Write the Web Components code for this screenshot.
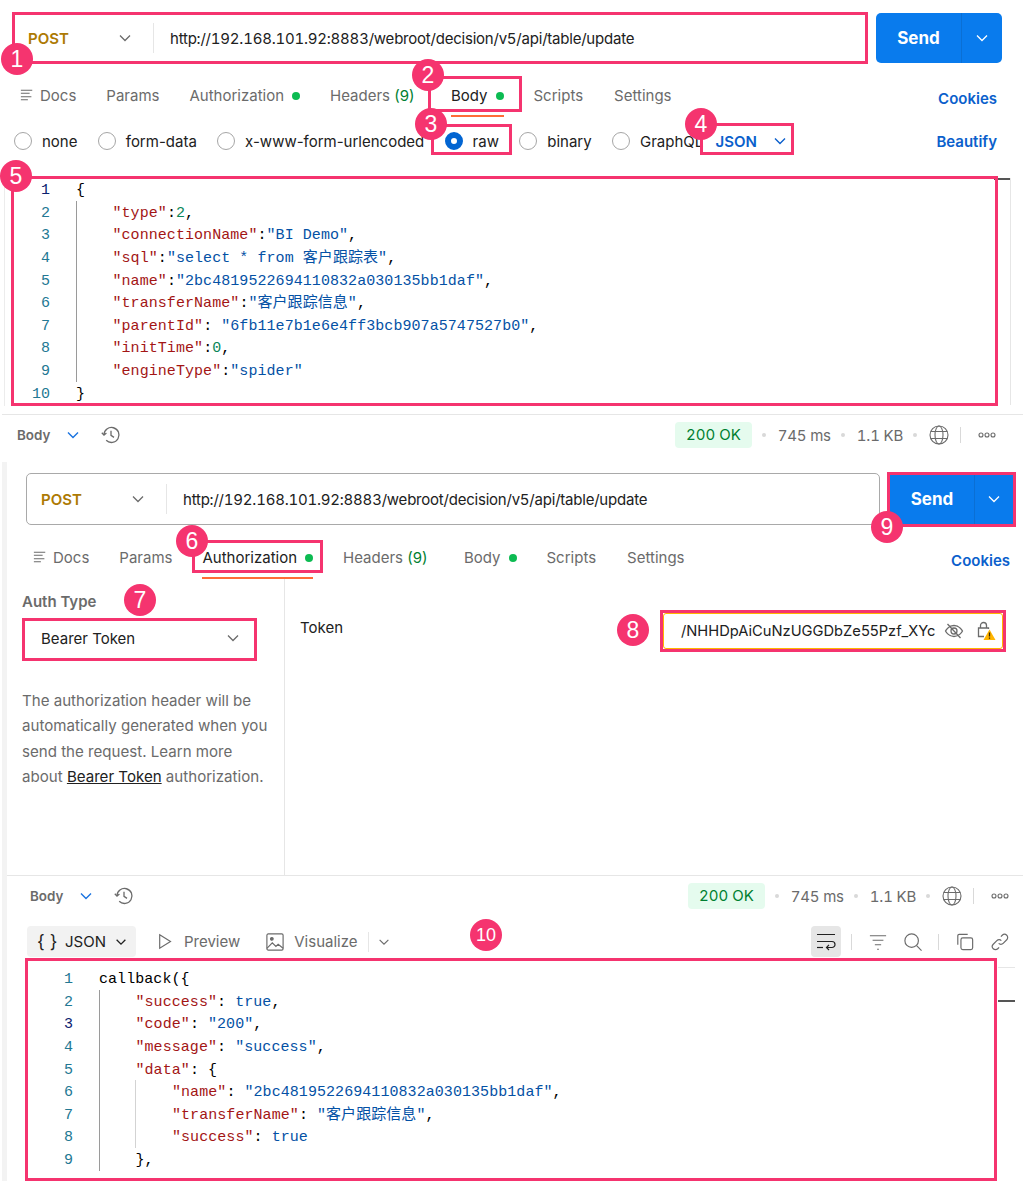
<!DOCTYPE html>
<html lang="en">
<head>
<meta charset="utf-8">
<title>Postman request</title>
<style>
    html, body { margin: 0; background: #fff; }
    body {
        position: relative;
        width: 1023px;
        height: 1181px;
        overflow: hidden;
        font-family: Inter, "Noto Sans", sans-serif;
    }
</style>
</head>
<body>
<req-pane>
    <url-bar></url-bar>
    <tab-row active="Body"></tab-row>
    <body-options></body-options>
    <code-view gutter="50" ruler="0">
        <code-line n="1" active>{</code-line>
        <code-line n="2" g1><span class="k">"type"</span>:<span class="n">2</span>,</code-line>
        <code-line n="3" g1><span class="k">"connectionName"</span>:<span class="s">"BI Demo"</span>,</code-line>
        <code-line n="4" g1><span class="k">"sql"</span>:<span class="s">"select * from 客户跟踪表"</span>,</code-line>
        <code-line n="5" g1><span class="k">"name"</span>:<span class="s">"2bc4819522694110832a030135bb1daf"</span>,</code-line>
        <code-line n="6" g1><span class="k">"transferName"</span>:<span class="s">"客户跟踪信息"</span>,</code-line>
        <code-line n="7" g1><span class="k">"parentId"</span>: <span class="s">"6fb11e7b1e6e4ff3bcb907a5747527b0"</span>,</code-line>
        <code-line n="8" g1><span class="k">"initTime"</span>:<span class="n">0</span>,</code-line>
        <code-line n="9" g1><span class="k">"engineType"</span>:<span class="s">"spider"</span></code-line>
        <code-line n="10" depth="0">}</code-line>
    </code-view>
    <status-bar></status-bar>
</req-pane>

<req-pane second>
    <url-bar></url-bar>
    <tab-row active="Authorization"></tab-row>
    <auth-pane></auth-pane>
    <status-bar></status-bar>
    <resp-toolbar></resp-toolbar>
    <code-view gutter="72" ruler="32" second>
        <code-line n="1">callback({</code-line>
        <code-line n="2" g1><span class="k">"success"</span>: <span class="s">true</span>,</code-line>
        <code-line n="3" g1 active><span class="k">"code"</span>: <span class="s">"200"</span>,</code-line>
        <code-line n="4" g1><span class="k">"message"</span>: <span class="s">"success"</span>,</code-line>
        <code-line n="5" g1><span class="k">"data"</span>: {</code-line>
        <code-line n="6" g1 g2 depth="2"><span class="k">"name"</span>: <span class="s">"2bc4819522694110832a030135bb1daf"</span>,</code-line>
        <code-line n="7" g1 g2 depth="2"><span class="k">"transferName"</span>: <span class="s">"客户跟踪信息"</span>,</code-line>
        <code-line n="8" g1 g2 depth="2"><span class="k">"success"</span>: <span class="s">true</span></code-line>
        <code-line n="9" g1>},</code-line>
    </code-view>
</req-pane>

<anno-box x="12" y="12" w="856" h="52"></anno-box>
<anno-box x="428" y="76" w="94" h="36"></anno-box>
<anno-box x="431" y="124" w="81" h="31"></anno-box>
<anno-box x="700" y="123" w="94" h="32"></anno-box>
<anno-box x="11" y="176" w="987" h="230"></anno-box>
<anno-box x="192" y="540" w="131" h="33"></anno-box>
<anno-box x="22" y="618" w="235" h="43"></anno-box>
<anno-box x="660" y="610" w="346" h="42"></anno-box>
<anno-box x="887" y="472" w="129" h="55"></anno-box>
<anno-box x="25" y="958" w="972" h="223"></anno-box>

<anno-pin x="17" y="59">1</anno-pin>
<anno-pin x="428" y="75">2</anno-pin>
<anno-pin x="431" y="124">3</anno-pin>
<anno-pin x="701" y="124">4</anno-pin>
<anno-pin x="16" y="176">5</anno-pin>
<anno-pin x="192" y="541">6</anno-pin>
<anno-pin x="140" y="600">7</anno-pin>
<anno-pin x="633" y="630">8</anno-pin>
<anno-pin x="887" y="527">9</anno-pin>
<anno-pin x="486" y="935" small>10</anno-pin>

<script>
const ICONS = {
    chevron: '<path d="M3 5.5l5 5 5-5"/>',
    docs: '<path d="M1 2.5h13M1 6h10M1 10h12M1 13.5h8"/>',
    history: '<path d="M3 10a7.5 7.5 0 1 1 2.2 5.3"/><path d="M.8 7.8 3 10.2l2.4-2.2"/><path d="M10 5.8v4.6l3 2"/>',
    globe: '<circle cx="10" cy="10" r="9"/><ellipse cx="10" cy="10" rx="4" ry="9"/><path d="M1.8 6.5h16.4M1.8 13.5h16.4"/>',
    eyeoff: '<path d="M1.5 10S4.5 4.5 10 4.5 18.5 10 18.5 10 15.5 15.5 10 15.5 1.5 10 1.5 10z"/><circle cx="10" cy="10" r="3"/><path d="M3.5 3l13 14"/>',
    lock: '<path d="M4.5 7V4.5a3 3 0 0 1 6 0V7"/><path d="M8 15.5H2.5v-8.5h10v1"/><path d="M13.5 8.5l6 10.5h-12z" fill="#ffb400" stroke="none"/><path d="M13.5 11.5v4M13.5 16.5v1.2" stroke="#3b2a00"/>',
    play: '<path d="M3 2l12 7.5L3 17z"/>',
    image: '<rect x="1" y="1" width="18" height="18" rx="1.5"/><circle cx="6.5" cy="6.5" r="1.5" fill="currentColor"/><path d="M1 17l6-6 4 4 2.5-2.5L19 17"/>',
    wrap: '<path d="M1 2.5h18M1 9.5h15a3 3 0 0 1 0 6h-5"/><path d="M13 12.8l-2.5 2.7 2.5 2.5"/><path d="M1 15.5h6"/>',
    filter: '<path d="M1 3h18M4 8h12M6.5 13h7M9 18h2"/>',
    search: '<circle cx="8.5" cy="8.5" r="7.5"/><path d="M14 14l5.5 5.5"/>',
    copy: '<rect x="5.5" y="5.5" width="13" height="13" rx="2"/><path d="M2 13V3a1.5 1.5 0 0 1 1.5-1.5H13"/>',
    link: '<path d="M8.5 11.5a3.5 3.5 0 0 0 5 0l4-4a3.5 3.5 0 0 0-5-5l-1.5 1.5"/><path d="M11.5 8.5a3.5 3.5 0 0 0-5 0l-4 4a3.5 3.5 0 0 0 5 5L9 16"/>'
};

const VIEWBOX = { chevron: 16, docs: 16 };

class PmIcon extends HTMLElement {
    constructor() {
        super();
        this.attachShadow({ mode: 'open' });
    }

    connectedCallback() {
        const name = this.getAttribute('name');
        const size = this.getAttribute('size') || 16;
        const box = VIEWBOX[name] || 20;
        const stroke = this.getAttribute('stroke') || 1.3;
        this.shadowRoot.innerHTML = `
            <style>
                :host { display: inline-flex; flex: none; }
                svg { display: block; fill: none; stroke: currentColor; }
            </style>
            <svg width="${size}" height="${size}" viewBox="0 0 ${box} ${box}" stroke-width="${stroke}">${ICONS[name]}</svg>
        `;
    }
}

class ReqPane extends HTMLElement {
    constructor() {
        super();
        this.attachShadow({ mode: 'open' });
    }

    connectedCallback() {
        this.shadowRoot.innerHTML = `
            <style>
                :host {
                    display: flex;
                    flex-direction: column;
                    box-sizing: border-box;
                    width: 1023px;
                    margin-bottom: 7px;
                }
                :host([second]) {
                    border-left: 5px solid #f3f3f3;
                    margin: 0 0 0 2px;
                    width: 1021px;
                }
            </style>
            <slot></slot>
        `;
    }
}

class UrlBar extends HTMLElement {
    constructor() {
        super();
        this.attachShadow({ mode: 'open' });
    }

    connectedCallback() {
        this.shadowRoot.innerHTML = `
            <style>
                :host {
                    display: flex;
                    gap: 9px;
                    padding: 13px 21px 0 13px;
                    height: 50px;
                    font-size: 15px;
                }
                :host-context(req-pane[second]) {
                    padding: 11px 10px 0 19px;
                    height: 52px;
                    gap: 10px;
                }
                .field {
                    flex: 1;
                    display: flex;
                    align-items: center;
                    box-sizing: border-box;
                    padding-left: 15px;
                    border-radius: 5px;
                    color: #212121;
                }
                :host-context(req-pane[second]) .field { border: 1px solid #a9a9a9; padding-left: 14px; }
                .method {
                    width: 89px;
                    color: #ad7a03;
                    font-weight: 600;
                }
                .url { font-variant-numeric: tabular-nums; letter-spacing: -0.22px; }
                pm-icon { color: #6b6b6b; }
                .rule { width: 1px; height: 30px; background: #e6e6e6; margin: 0 16px 0 20px; }
                .send {
                    width: 126px;
                    display: flex;
                    background: #097bed;
                    color: #fff;
                    border-radius: 5px;
                }
                :host-context(req-pane[second]) .send { width: 123px; border-radius: 0; }
                .label {
                    flex: 1;
                    display: flex;
                    align-items: center;
                    justify-content: center;
                    font-size: 17px;
                    font-weight: 700;
                    border-right: 1px solid #0a6fd4;
                }
                .more { width: 40px; display: flex; align-items: center; justify-content: center; }
                :host-context(req-pane[second]) .more { width: 38px; }
                .more pm-icon { color: #fff; }
            </style>
            <div class="field">
                <span class="method">POST</span>
                <pm-icon name="chevron" size="16"></pm-icon>
                <span class="rule"></span>
                <span class="url">http://192.168.101.92:8883/webroot/decision/v5/api/table/update</span>
            </div>
            <div class="send">
                <span class="label">Send</span>
                <span class="more"><pm-icon name="chevron" size="16"></pm-icon></span>
            </div>
        `;
    }
}

class TabRow extends HTMLElement {
    constructor() {
        super();
        this.attachShadow({ mode: 'open' });
    }

    connectedCallback() {
        const active = this.getAttribute('active');
        const tabs = [
            { name: 'Params' },
            { name: 'Authorization', dot: true },
            { name: 'Headers', count: '(9)' },
            { name: 'Body', dot: true },
            { name: 'Scripts' },
            { name: 'Settings' }
        ];
        const items = tabs.map(tab => `
            <span class="tab ${tab.name === active ? 'on' : ''} ${tab.count ? 'wide' : ''} ${tab.name === 'Scripts' ? 'nudge' : ''}">
                ${tab.name}${tab.count ? ` <em>${tab.count}</em>` : ''}${tab.dot ? '<i></i>' : ''}
            </span>
        `).join('');

        this.shadowRoot.innerHTML = `
            <style>
                :host {
                    display: flex;
                    align-items: center;
                    gap: 30px;
                    height: 34px;
                    margin-top: 15px;
                    padding: 0 26px 0 20px;
                    font-size: 15px;
                    color: #6b6b6b;
                }
                :host-context(req-pane[second]) { padding: 0 13px 0 26px; }
                .docs { display: flex; align-items: center; gap: 6px; }
                .tab { position: relative; white-space: nowrap; }
                .wide { margin-right: 6.5px; }
                .nudge { margin-right: 1px; }
                .on { color: #212121; }
                .on::after {
                    content: "";
                    position: absolute;
                    left: 0;
                    right: 0;
                    bottom: -12px;
                    height: 2px;
                    background: #ff6c37;
                }
                em { font-style: normal; color: #007f31; }
                i {
                    display: inline-block;
                    width: 8px;
                    height: 8px;
                    margin-left: 8px;
                    border-radius: 50%;
                    background: #0cbb52;
                    vertical-align: 1px;
                }
                .cookies {
                    margin-left: auto;
                    padding-top: 6px;
                    color: #0b5fcc;
                    font-weight: 600;
                }
            </style>
            <span class="docs"><pm-icon name="docs" size="14" stroke="1.2"></pm-icon>Docs</span>
            ${items}
            <span class="cookies">Cookies</span>
        `;
    }
}

class BodyOptions extends HTMLElement {
    constructor() {
        super();
        this.attachShadow({ mode: 'open' });
    }

    connectedCallback() {
        const options = ['none', 'form-data', 'x-www-form-urlencoded', 'raw', 'binary', 'GraphQL'];
        const items = options.map(name => `
            <label class="${name === 'raw' ? 'on' : ''}"><b></b>${name}</label>
        `).join('');

        this.shadowRoot.innerHTML = `
            <style>
                :host {
                    display: flex;
                    align-items: center;
                    gap: 20.3px;
                    height: 32px;
                    margin-top: 13px;
                    padding: 0 26px 0 14px;
                    font-size: 15px;
                    color: #212121;
                }
                label { display: flex; align-items: center; gap: 10px; }
                b {
                    box-sizing: border-box;
                    width: 18px;
                    height: 18px;
                    border: 1px solid #a6a6a6;
                    border-radius: 50%;
                }
                .on b { border: 6px solid #0265d2; }
                .json {
                    display: flex;
                    align-items: center;
                    gap: 15px;
                    margin-left: -8px;
                    color: #0b5fcc;
                    font-weight: 600;
                }
                .beautify { margin-left: auto; color: #0b5fcc; font-weight: 600; }
            </style>
            ${items}
            <span class="json">JSON<pm-icon name="chevron" size="16" stroke="1.4"></pm-icon></span>
            <span class="beautify">Beautify</span>
        `;
    }
}

class CodeView extends HTMLElement {
    constructor() {
        super();
        this.attachShadow({ mode: 'open' });
    }

    connectedCallback() {
        const ruler = this.getAttribute('ruler');
        this.style.setProperty('--gutter', this.getAttribute('gutter') - (this.hasAttribute('second') ? 7 : 0) + 'px');
        this.shadowRoot.innerHTML = `
            <style>
                :host {
                    display: block;
                    position: relative;
                    height: 237px;
                    margin: 21px 0 0 2px;
                    --gutter-shift: -2px;
                    border-bottom: 1px solid #e6e6e6;
                    box-sizing: border-box;
                }
                :host([second]) {
                    height: 214px;
                    margin: 10px 0 0;
                    --gutter-shift: 1px;
                    border-bottom: 0;
                }
                .edge {
                    position: absolute;
                    left: 2px;
                    top: 0;
                    width: 1px;
                    height: 228px;
                    background: #ececec;
                }
                :host([second]) .edge { display: none; }
                .ruler {
                    position: absolute;
                    top: 0;
                    right: 12px;
                    width: 16px;
                    height: 227px;
                    border-right: 1px solid #e6e6e6;
                }
                :host([second]) .ruler { right: 8px; width: 17px; border-right: 0; border-top: 1px solid #e6e6e6; }
                .ruler::after {
                    content: "";
                    position: absolute;
                    left: 0;
                    right: 0;
                    top: ${ruler}px;
                    height: 2px;
                    background: #555;
                }
            </style>
            <slot></slot>
            <div class="edge"></div>
            <div class="ruler"></div>
        `;
    }
}

class CodeLine extends HTMLElement {
    constructor() {
        super();
        this.attachShadow({ mode: 'open' });
    }

    connectedCallback() {
        const depth = this.hasAttribute('depth') ? +this.getAttribute('depth') : (this.hasAttribute('g1') ? 1 : 0);
        this.style.setProperty('--indent', depth * 36.5 + 'px');
        this.shadowRoot.innerHTML = `
            <style>
                :host {
                    display: flex;
                    height: 22.65px;
                    line-height: 26.65px;
                    font-family: "Liberation Mono", "Noto Sans CJK SC", monospace;
                    font-size: 15px;
                    letter-spacing: 0.06px;
                    color: #000;
                    white-space: pre;
                }
                .num {
                    box-sizing: border-box;
                    flex: none;
                    width: calc(var(--gutter) + var(--gutter-shift));
                    text-align: right;
                    color: #237893;
                }
                :host([active]) .num { color: #0b216f; }
                .src {
                    position: relative;
                    margin-left: 26px;
                    padding-left: var(--indent);
                }
                :host([g1]) .src::before, :host([g2]) .src::after {
                    content: "";
                    position: absolute;
                    top: 0;
                    bottom: 0;
                    left: 0;
                    width: 1px;
                    background: #9a9a9a;
                }
                :host([g2]) .src::after { left: 36px; background: #d3d3d3; }
                ::slotted(.k) { color: #a31515; }
                ::slotted(.s) { color: #0451a5; }
                ::slotted(.n) { color: #098658; }
            </style>
            <span class="num">${this.getAttribute('n')}</span>
            <span class="src"><slot></slot></span>
        `;
    }
}

class StatusBar extends HTMLElement {
    constructor() {
        super();
        this.attachShadow({ mode: 'open' });
    }

    connectedCallback() {
        this.shadowRoot.innerHTML = `
            <style>
                :host {
                    display: flex;
                    align-items: center;
                    box-sizing: border-box;
                    height: 40px;
                    padding: 0 27px 0 17px;
                    font-size: 15px;
                    font-variant-numeric: tabular-nums;
                    color: #6b6b6b;
                }
                :host-context(req-pane[second]) { padding: 0 14px 0 23px; }
                .body { font-size: 13.4px; font-weight: 600; }
                .blue { color: #1a73e0; margin: 0 20px 0 15px; }
                .chip {
                    margin-left: auto;
                    padding: 0 11px;
                    height: 26px;
                    line-height: 26px;
                    border-radius: 4px;
                    background: #e5fbee;
                    color: #007f31;
                }
                .metric { letter-spacing: -0.2px; }
                .sep { width: 4px; height: 4px; margin: 0 12px 0 10px; border-radius: 50%; background: #d9d9d9; }
                .bar { width: 1px; height: 16px; margin: 0 17px 0 11px; background: #d9d9d9; }
            </style>
            <span class="body">Body</span>
            <pm-icon class="blue" name="chevron" size="16" stroke="1.4"></pm-icon>
            <pm-icon name="history" size="20"></pm-icon>
            <span class="chip">200 OK</span>
            <span class="sep"></span>
            <span class="metric">745 ms</span>
            <span class="sep"></span>
            <span class="metric">1.1 KB</span>
            <span class="sep"></span>
            <pm-icon name="globe" size="20" stroke="1.1"></pm-icon>
            <span class="bar"></span>
            <svg width="18" height="8" viewBox="0 0 18 8" fill="none" stroke="#6b6b6b" stroke-width="1.1">
                <circle cx="3" cy="4" r="2"/><circle cx="9" cy="4" r="2"/><circle cx="15" cy="4" r="2"/>
            </svg>
        `;
    }
}

class AuthPane extends HTMLElement {
    constructor() {
        super();
        this.attachShadow({ mode: 'open' });
    }

    connectedCallback() {
        this.shadowRoot.innerHTML = `
            <style>
                :host {
                    display: flex;
                    height: 298px;
                    margin-top: 3px;
                    border-bottom: 1px solid #e6e6e6;
                    font-size: 15px;
                    color: #212121;
                }
                .side {
                    box-sizing: border-box;
                    width: 278px;
                    padding: 15px 0 0 15px;
                    border-right: 1px solid #e6e6e6;
                }
                h4 { margin: 0; height: 20px; line-height: 20px; font-size: 15px; font-weight: 600; color: #6b6b6b; }
                .select {
                    display: flex;
                    align-items: center;
                    justify-content: space-between;
                    box-sizing: border-box;
                    width: 229px;
                    height: 38px;
                    margin: 7px 0 0 3px;
                    padding: 0 13px 0 16px;
                }
                .select pm-icon { color: #6b6b6b; }
                p {
                    margin: 31px 0 0;
                    font-size: 15.1px;
                    line-height: 25.4px;
                    color: #6b6b6b;
                }
                p span { display: block; white-space: nowrap; }
                a { color: #212121; text-decoration: underline; }
                .main {
                    flex: 1;
                    display: flex;
                    justify-content: space-between;
                    align-items: flex-start;
                    padding: 41px 20px 0 15px;
                }
                .main > span { line-height: 20px; }
                .token {
                    display: flex;
                    align-items: center;
                    box-sizing: border-box;
                    width: 340px;
                    height: 36px;
                    margin-top: -5px;
                    padding: 0 7px 0 12px;
                    border: 1px solid #ffb400;
                    border-radius: 3px;
                }
                .value {
                    flex: none;
                    box-sizing: border-box;
                    width: 259px;
                    margin-right: 9px;
                    padding-left: 5px;
                    font-size: 14.7px;
                    white-space: nowrap;
                }
                .token pm-icon { color: #6b6b6b; }
                .token pm-icon + pm-icon { margin-left: 12px; }
            </style>
            <div class="side">
                <h4>Auth Type</h4>
                <div class="select">Bearer Token<pm-icon name="chevron" size="16"></pm-icon></div>
                <p>
                    <span>The authorization header will be</span>
                    <span>automatically generated when you</span>
                    <span>send the request. Learn more</span>
                    <span>about <a>Bearer Token</a> authorization.</span>
                </p>
            </div>
            <div class="main">
                <span>Token</span>
                <div class="token">
                    <span class="value">/NHHDpAiCuNzUGGDbZe55Pzf_XYc</span>
                    <pm-icon name="eyeoff" size="20"></pm-icon>
                    <pm-icon name="lock" size="20"></pm-icon>
                </div>
            </div>
        `;
    }
}

class RespToolbar extends HTMLElement {
    constructor() {
        super();
        this.attachShadow({ mode: 'open' });
    }

    connectedCallback() {
        this.shadowRoot.innerHTML = `
            <style>
                :host {
                    display: flex;
                    align-items: center;
                    height: 31px;
                    margin-top: 10px;
                    padding: 0 14px 0 20px;
                    font-size: 15px;
                    color: #6b6b6b;
                }
                .json {
                    display: flex;
                    align-items: center;
                    gap: 8px;
                    box-sizing: border-box;
                    width: 109px;
                    height: 31px;
                    padding-left: 10px;
                    border-radius: 4px;
                    background: #f2f2f2;
                    color: #212121;
                }
                .brace { width: 20px; font-size: 18px; white-space: nowrap; }
                .item { display: flex; align-items: center; }
                .preview { margin-left: 21px; gap: 9px; }
                .visual { margin-left: 26px; gap: 10px; }
                .rule { width: 1px; height: 20px; background: #e6e6e6; margin: 0 8px 0 10px; }
                .tools { margin-left: auto; display: flex; align-items: center; }
                .wrap {
                    display: flex;
                    align-items: center;
                    justify-content: center;
                    width: 30px;
                    height: 31px;
                    border-radius: 4px;
                    background: #e6e6e6;
                    color: #212121;
                }
                .tools .rule { height: 16px; background: #d9d9d9; margin: 0 17px 0 10px; }
                .tools .wide { margin-left: 16px; }
                .gap { margin-left: 17px; }
            </style>
            <span class="json"><span class="brace">{ }</span>JSON<pm-icon name="chevron" size="14" stroke="1.5"></pm-icon></span>
            <span class="item preview"><pm-icon name="play" size="18"></pm-icon>Preview</span>
            <span class="item visual"><pm-icon name="image" size="18"></pm-icon>Visualize</span>
            <span class="rule"></span>
            <pm-icon name="chevron" size="14"></pm-icon>
            <span class="tools">
                <span class="wrap"><pm-icon name="wrap" size="20" stroke="1.2"></pm-icon></span>
                <span class="rule"></span>
                <pm-icon name="filter" size="18" stroke="1.2"></pm-icon>
                <pm-icon class="gap" name="search" size="18"></pm-icon>
                <span class="rule wide"></span>
                <pm-icon name="copy" size="18"></pm-icon>
                <pm-icon class="gap" name="link" size="18"></pm-icon>
            </span>
        `;
    }
}

class AnnoBox extends HTMLElement {
    constructor() {
        super();
        this.attachShadow({ mode: 'open' });
    }

    connectedCallback() {
        this.style.left = this.getAttribute('x') + 'px';
        this.style.top = this.getAttribute('y') + 'px';
        this.style.width = this.getAttribute('w') + 'px';
        this.style.height = this.getAttribute('h') + 'px';
        this.shadowRoot.innerHTML = `
            <style>
                :host {
                    display: block;
                    position: absolute;
                    box-sizing: border-box;
                    border: 3px solid #f5346f;
                }
            </style>
        `;
    }
}

class AnnoPin extends HTMLElement {
    constructor() {
        super();
        this.attachShadow({ mode: 'open' });
    }

    connectedCallback() {
        this.style.left = this.getAttribute('x') - 16 + 'px';
        this.style.top = this.getAttribute('y') - 16 + 'px';
        this.shadowRoot.innerHTML = `
            <style>
                :host {
                    display: flex;
                    align-items: center;
                    justify-content: center;
                    position: absolute;
                    width: 32px;
                    height: 32px;
                    border-radius: 50%;
                    background: #f5346f;
                    color: #fff;
                    font-family: "Liberation Sans", Arial, sans-serif;
                    font-size: 23px;
                }
                :host([small]) { font-size: 18px; }
            </style>
            <slot></slot>
        `;
    }
}

customElements.define('pm-icon', PmIcon);
customElements.define('req-pane', ReqPane);
customElements.define('url-bar', UrlBar);
customElements.define('tab-row', TabRow);
customElements.define('body-options', BodyOptions);
customElements.define('code-view', CodeView);
customElements.define('code-line', CodeLine);
customElements.define('status-bar', StatusBar);
customElements.define('auth-pane', AuthPane);
customElements.define('resp-toolbar', RespToolbar);
customElements.define('anno-box', AnnoBox);
customElements.define('anno-pin', AnnoPin);
</script>
</body>
</html>
